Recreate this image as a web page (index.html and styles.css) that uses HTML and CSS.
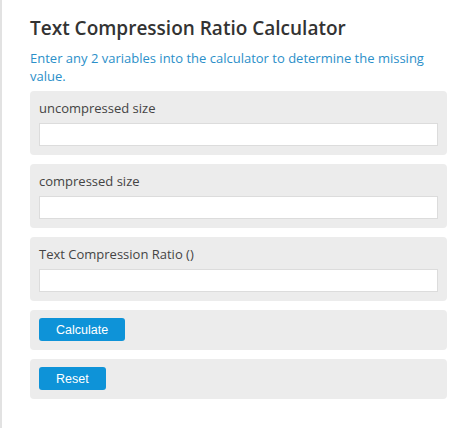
FILE: index.html
```html
<!DOCTYPE html>
<html lang="en">
<head>
	<meta charset="UTF-8">
	<title>Text Compression Ratio Calculator</title>
	<link rel="stylesheet" href="styles.css">
</head>
<body>
	<div class="page">
		<h1>Text Compression Ratio Calculator</h1>
		<p class="intro">Enter any 2 variables into the calculator to determine the missing value.</p>
		<form class="calc">
			<div class="field">
				<label for="uncompressed">uncompressed size</label>
				<input type="text" id="uncompressed">
			</div>
			<div class="field">
				<label for="compressed">compressed size</label>
				<input type="text" id="compressed">
			</div>
			<div class="field">
				<label for="ratio">Text Compression Ratio ()</label>
				<input type="text" id="ratio">
			</div>
			<div class="field action">
				<button type="button" class="btn">Calculate</button>
			</div>
			<div class="field action">
				<button type="reset" class="btn">Reset</button>
			</div>
		</form>
	</div>
</body>
</html>
```

FILE: styles.css
```css
body {
	margin: 0;
	background: #fff;
	font-family: "Open Sans", "Liberation Sans", sans-serif;
}
.page {
	border-left: 2px solid #e2e2e2;
	padding: 14px 27px 30px 28px;
	min-height: 384px;
}
h1 {
	margin: 0;
	font-size: 19px;
	font-weight: 600;
	color: #333;
	line-height: 28px;
}
.intro {
	margin: 7px 0 6px;
	font-size: 13px;
	line-height: 18px;
	color: #2b8fc9;
}
.calc {
	display: flex;
	flex-direction: column;
	gap: 9px;
}
.field {
	background: #ececec;
	border-radius: 4px;
	padding: 8px 9px 9px;
	display: flex;
	flex-direction: column;
}
.field label {
	font-size: 13px;
	line-height: 18px;
	color: #444;
	margin-bottom: 6px;
}
.field input {
	height: 23px;
	box-sizing: border-box;
	border: 1px solid #dcdcdc;
	background: #fff;
	margin: 0;
	padding: 2px 4px;
}
.action {
	align-items: flex-start;
}
.btn {
	font-family: "Liberation Sans", Arial, sans-serif;
	font-size: 12.5px;
	color: #fff;
	background: #0e93d8;
	border: 0;
	border-radius: 3px;
	height: 23px;
	padding: 0 17px;
	cursor: pointer;
}
```
